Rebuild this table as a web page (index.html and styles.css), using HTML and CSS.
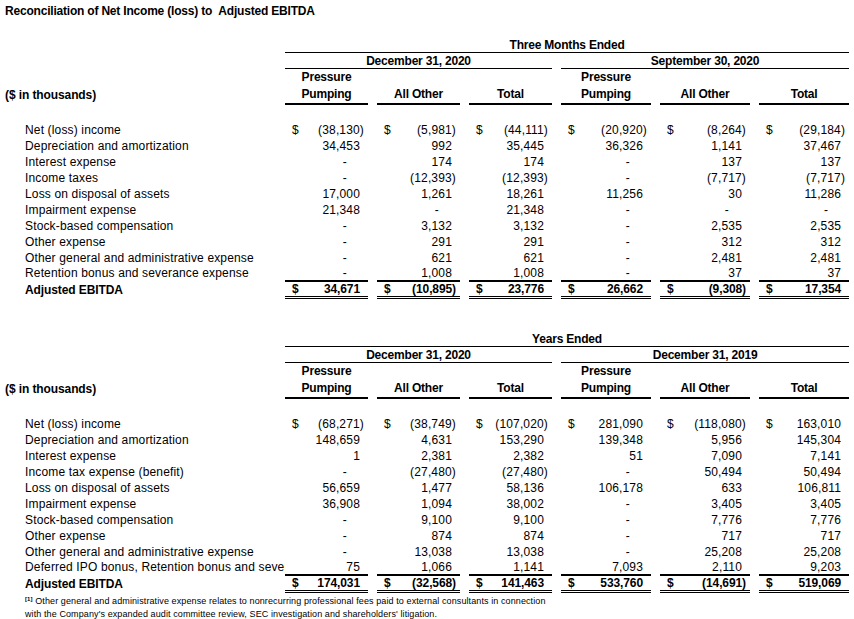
FILE: index.html
```html
<!DOCTYPE html>
<html lang="en">
<head>
    <meta charset="UTF-8">
    <title>Reconciliation of Net Income (loss) to Adjusted EBITDA</title>
    <link rel="stylesheet" href="styles.css">
</head>
<body>
    <h1 class="title">Reconciliation of Net Income (loss) to &nbsp;Adjusted EBITDA</h1>

    <table class="recon first">
        <colgroup>
            <col class="w-label"><col class="w-a"><col class="w-gap"><col class="w-a"><col class="w-gap"><col class="w-a">
            <col class="w-gap"><col class="w-b"><col class="w-gap"><col class="w-b"><col class="w-gap"><col class="w-b">
        </colgroup>
        <tr class="top"><td></td><td colspan="11" class="span">Three Months Ended</td></tr>
        <tr class="mid"><td></td><td colspan="5" class="span">December 31, 2020</td><td></td><td colspan="5" class="span">September 30, 2020</td></tr>
        <tr class="pr"><td></td><td class="hd">Pressure</td><td></td><td></td><td></td><td></td><td></td><td class="hd">Pressure</td><td></td><td></td><td></td><td></td></tr>
        <tr class="pu"><td class="unit">($ in thousands)</td><td class="hd ul">Pumping</td><td></td><td class="hd ul">All Other</td><td></td><td class="hd ul">Total</td><td></td><td class="hd ul">Pumping</td><td></td><td class="hd ul">All Other</td><td></td><td class="hd ul">Total</td></tr>
        <tr class="blank"><td colspan="12"></td></tr>
        <tr><td class="lbl">Net (loss) income</td><td class="n"><span class="c">$</span><span class="neg">(38,130)</span></td><td></td><td class="n"><span class="c">$</span><span class="neg">(5,981)</span></td><td></td><td class="n"><span class="c">$</span><span class="neg">(44,111)</span></td><td></td><td class="n"><span class="c">$</span><span class="neg">(20,920)</span></td><td></td><td class="n"><span class="c">$</span><span class="neg">(8,264)</span></td><td></td><td class="n"><span class="c">$</span><span class="neg">(29,184)</span></td></tr>
        <tr><td class="lbl">Depreciation and amortization</td><td class="n">34,453</td><td></td><td class="n">992</td><td></td><td class="n">35,445</td><td></td><td class="n">36,326</td><td></td><td class="n">1,141</td><td></td><td class="n">37,467</td></tr>
        <tr><td class="lbl">Interest expense</td><td class="n"><span class="z">-</span></td><td></td><td class="n">174</td><td></td><td class="n">174</td><td></td><td class="n"><span class="z">-</span></td><td></td><td class="n">137</td><td></td><td class="n">137</td></tr>
        <tr><td class="lbl">Income taxes</td><td class="n"><span class="z">-</span></td><td></td><td class="n"><span class="neg">(12,393)</span></td><td></td><td class="n"><span class="neg">(12,393)</span></td><td></td><td class="n"><span class="z">-</span></td><td></td><td class="n"><span class="neg">(7,717)</span></td><td></td><td class="n"><span class="neg">(7,717)</span></td></tr>
        <tr><td class="lbl">Loss on disposal of assets</td><td class="n">17,000</td><td></td><td class="n">1,261</td><td></td><td class="n">18,261</td><td></td><td class="n">11,256</td><td></td><td class="n">30</td><td></td><td class="n">11,286</td></tr>
        <tr><td class="lbl">Impairment expense</td><td class="n">21,348</td><td></td><td class="n"><span class="z">-</span></td><td></td><td class="n">21,348</td><td></td><td class="n"><span class="z">-</span></td><td></td><td class="n"><span class="z">-</span></td><td></td><td class="n"><span class="z">-</span></td></tr>
        <tr><td class="lbl">Stock-based compensation</td><td class="n"><span class="z">-</span></td><td></td><td class="n">3,132</td><td></td><td class="n">3,132</td><td></td><td class="n"><span class="z">-</span></td><td></td><td class="n">2,535</td><td></td><td class="n">2,535</td></tr>
        <tr><td class="lbl">Other expense</td><td class="n"><span class="z">-</span></td><td></td><td class="n">291</td><td></td><td class="n">291</td><td></td><td class="n"><span class="z">-</span></td><td></td><td class="n">312</td><td></td><td class="n">312</td></tr>
        <tr><td class="lbl">Other general and administrative expense</td><td class="n"><span class="z">-</span></td><td></td><td class="n">621</td><td></td><td class="n">621</td><td></td><td class="n"><span class="z">-</span></td><td></td><td class="n">2,481</td><td></td><td class="n">2,481</td></tr>
        <tr class="last"><td class="lbl">Retention bonus and severance expense</td><td class="n"><span class="z">-</span></td><td></td><td class="n">1,008</td><td></td><td class="n">1,008</td><td></td><td class="n"><span class="z">-</span></td><td></td><td class="n">37</td><td></td><td class="n">37</td></tr>
        <tr class="tot"><td class="lbl">Adjusted EBITDA</td><td class="n"><span class="c">$</span>34,671</td><td></td><td class="n"><span class="c">$</span><span class="neg">(10,895)</span></td><td></td><td class="n"><span class="c">$</span>23,776</td><td></td><td class="n"><span class="c">$</span>26,662</td><td></td><td class="n"><span class="c">$</span><span class="neg">(9,308)</span></td><td></td><td class="n"><span class="c">$</span>17,354</td></tr>
    </table>

    <table class="recon second">
        <colgroup>
            <col class="w-label"><col class="w-a"><col class="w-gap"><col class="w-a"><col class="w-gap"><col class="w-a">
            <col class="w-gap"><col class="w-b"><col class="w-gap"><col class="w-b"><col class="w-gap"><col class="w-b">
        </colgroup>
        <tr class="top"><td></td><td colspan="11" class="span">Years Ended</td></tr>
        <tr class="mid"><td></td><td colspan="5" class="span">December 31, 2020</td><td></td><td colspan="5" class="span">December 31, 2019</td></tr>
        <tr class="pr"><td></td><td class="hd">Pressure</td><td></td><td></td><td></td><td></td><td></td><td class="hd">Pressure</td><td></td><td></td><td></td><td></td></tr>
        <tr class="pu"><td class="unit">($ in thousands)</td><td class="hd ul">Pumping</td><td></td><td class="hd ul">All Other</td><td></td><td class="hd ul">Total</td><td></td><td class="hd ul">Pumping</td><td></td><td class="hd ul">All Other</td><td></td><td class="hd ul">Total</td></tr>
        <tr class="blank"><td colspan="12"></td></tr>
        <tr><td class="lbl">Net (loss) income</td><td class="n"><span class="c">$</span><span class="neg">(68,271)</span></td><td></td><td class="n"><span class="c">$</span><span class="neg">(38,749)</span></td><td></td><td class="n"><span class="c">$</span><span class="neg">(107,020)</span></td><td></td><td class="n"><span class="c">$</span>281,090</td><td></td><td class="n"><span class="c">$</span><span class="neg">(118,080)</span></td><td></td><td class="n"><span class="c">$</span>163,010</td></tr>
        <tr><td class="lbl">Depreciation and amortization</td><td class="n">148,659</td><td></td><td class="n">4,631</td><td></td><td class="n">153,290</td><td></td><td class="n">139,348</td><td></td><td class="n">5,956</td><td></td><td class="n">145,304</td></tr>
        <tr><td class="lbl">Interest expense</td><td class="n">1</td><td></td><td class="n">2,381</td><td></td><td class="n">2,382</td><td></td><td class="n">51</td><td></td><td class="n">7,090</td><td></td><td class="n">7,141</td></tr>
        <tr><td class="lbl">Income tax expense (benefit)</td><td class="n"><span class="z">-</span></td><td></td><td class="n"><span class="neg">(27,480)</span></td><td></td><td class="n"><span class="neg">(27,480)</span></td><td></td><td class="n"><span class="z">-</span></td><td></td><td class="n">50,494</td><td></td><td class="n">50,494</td></tr>
        <tr><td class="lbl">Loss on disposal of assets</td><td class="n">56,659</td><td></td><td class="n">1,477</td><td></td><td class="n">58,136</td><td></td><td class="n">106,178</td><td></td><td class="n">633</td><td></td><td class="n">106,811</td></tr>
        <tr><td class="lbl">Impairment expense</td><td class="n">36,908</td><td></td><td class="n">1,094</td><td></td><td class="n">38,002</td><td></td><td class="n"><span class="z">-</span></td><td></td><td class="n">3,405</td><td></td><td class="n">3,405</td></tr>
        <tr><td class="lbl">Stock-based compensation</td><td class="n"><span class="z">-</span></td><td></td><td class="n">9,100</td><td></td><td class="n">9,100</td><td></td><td class="n"><span class="z">-</span></td><td></td><td class="n">7,776</td><td></td><td class="n">7,776</td></tr>
        <tr><td class="lbl">Other expense</td><td class="n"><span class="z">-</span></td><td></td><td class="n">874</td><td></td><td class="n">874</td><td></td><td class="n"><span class="z">-</span></td><td></td><td class="n">717</td><td></td><td class="n">717</td></tr>
        <tr><td class="lbl">Other general and administrative expense</td><td class="n"><span class="z">-</span></td><td></td><td class="n">13,038</td><td></td><td class="n">13,038</td><td></td><td class="n"><span class="z">-</span></td><td></td><td class="n">25,208</td><td></td><td class="n">25,208</td></tr>
        <tr class="last"><td class="lbl">Deferred IPO bonus, Retention bonus and severance expense</td><td class="n">75</td><td></td><td class="n">1,066</td><td></td><td class="n">1,141</td><td></td><td class="n">7,093</td><td></td><td class="n">2,110</td><td></td><td class="n">9,203</td></tr>
        <tr class="tot"><td class="lbl">Adjusted EBITDA</td><td class="n"><span class="c">$</span>174,031</td><td></td><td class="n"><span class="c">$</span><span class="neg">(32,568)</span></td><td></td><td class="n"><span class="c">$</span>141,463</td><td></td><td class="n"><span class="c">$</span>533,760</td><td></td><td class="n"><span class="c">$</span><span class="neg">(14,691)</span></td><td></td><td class="n"><span class="c">$</span>519,069</td></tr>
    </table>

    <p class="note"><sup>[1]</sup> Other general and administrative expense relates to nonrecurring professional fees paid to external consultants in connection<br>with the Company's expanded audit committee review, SEC investigation and shareholders' litigation.</p>
</body>
</html>
```

FILE: styles.css
```css
body {
    margin: 0;
    background: #fff;
    color: #000;
    font-family: 'Liberation Sans', Arial, sans-serif;
    font-size: 12px;
}
.title {
    margin: 0;
    padding: 4px 5px 0;
    font-size: 12px;
    line-height: 15px;
    font-weight: bold;
    letter-spacing: -0.2px;
}
.recon {
    width: 849px;
    table-layout: fixed;
    border-collapse: separate;
    border-spacing: 0;
    letter-spacing: 0.15px;
}
.first { margin-top: 18px; }
.second { margin-top: 32px; }
.w-label { width: 285px; }
.w-a { width: 83px; }
.w-b { width: 90px; }
.w-gap { width: 9px; }
.recon td {
    box-sizing: border-box;
    padding: 0;
    height: 16px;
    line-height: 14px;
    white-space: nowrap;
    overflow: hidden;
}
.span {
    text-align: center;
    font-weight: bold;
    letter-spacing: -0.2px;
    border-bottom: 1px solid #000;
}
.hd {
    text-align: center;
    font-weight: bold;
    letter-spacing: -0.2px;
}
.ul { border-bottom: 2px solid #000; }
.unit {
    font-weight: bold;
    letter-spacing: -0.1px;
    padding-left: 5px !important;
}
.recon .pu td { height: 20px; }
.recon .blank td { height: 17px; }
.recon .last td { height: 14px; }
.lbl { padding-left: 25px !important; }
.n {
    text-align: right;
    padding: 0 8px 0 7px !important;
}
.c { float: left; }
.neg {
    display: inline-block;
    margin-right: -4px;
}
.z { margin-right: 13px; }
.recon .tot td {
    height: 18px;
    font-weight: bold;
    letter-spacing: -0.1px;
}
.recon .tot .n {
    border-top: 2px solid #000;
    border-bottom: 3px double #000;
}
.note {
    margin: 0;
    padding-left: 25px;
    font-size: 9px;
    line-height: 13px;
    letter-spacing: 0.1px;
}
.note sup {
    font-size: 6px;
    font-weight: bold;
    vertical-align: 3px;
}
```
